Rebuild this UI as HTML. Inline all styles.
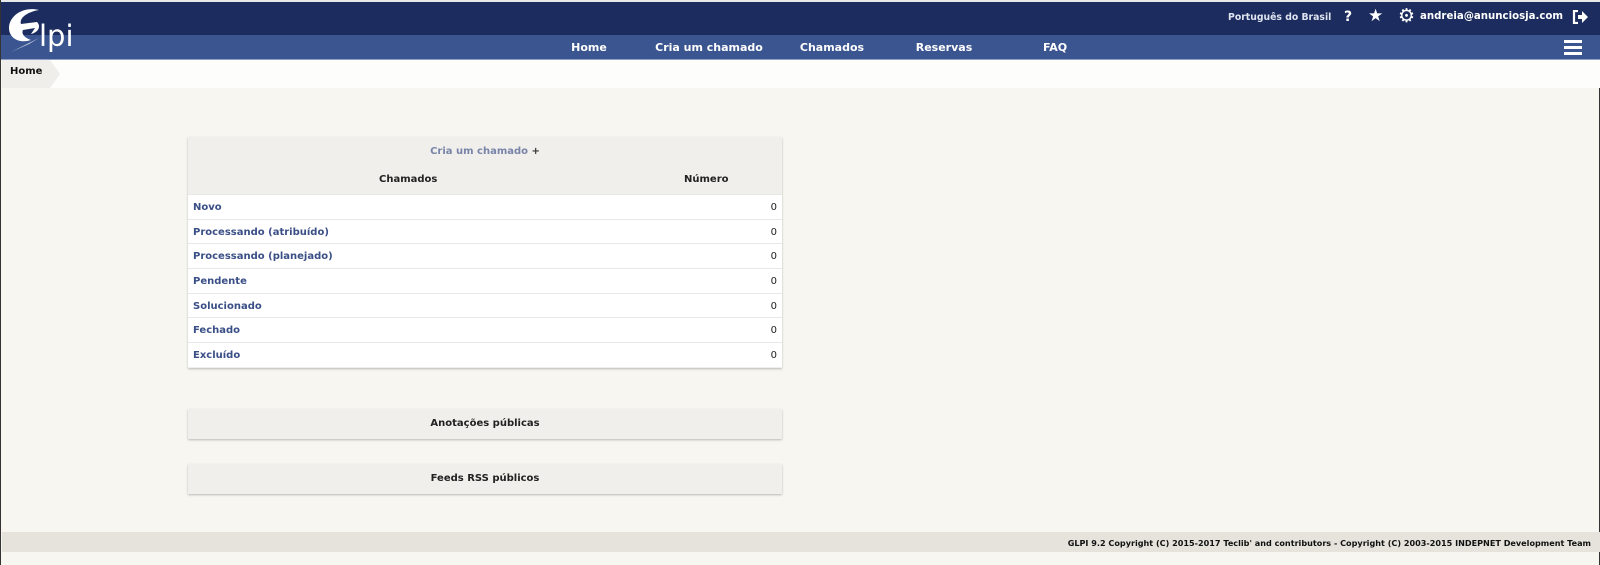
<!DOCTYPE html>
<html><head><meta charset="utf-8"><style>
*{margin:0;padding:0;box-sizing:border-box}
body{width:1600px;height:565px;background:#f7f6f1;font-family:"DejaVu Sans","Liberation Sans",sans-serif;position:relative;overflow:hidden;border-left:1px solid #333;border-right:1px solid #333}
.abs{position:absolute}
#top{left:0;top:0;width:1600px;height:35px;background:#1c2c5e;border-top:2px solid #e8e8e8}
#nav{left:0;top:35px;width:1600px;height:25px;background:#3b5590;border-bottom:1px solid #8ea0c8}
#crumb{left:1px;top:60px;width:1598px;height:28px;background:#fdfdfb}
.t{position:absolute;white-space:nowrap;font-weight:bold}
.navi{color:#fff;font-size:11px;top:41px;transform:translateX(-50%)}
.box{position:absolute;left:187px;width:594px;box-shadow:0 1px 2px rgba(0,0,0,.25)}
.row{height:24.7px;border-top:1px solid #e8e8e8;background:#fff;position:relative;font-size:10px;font-weight:bold}
.row span{position:absolute;left:5px;top:7px;color:#3a4f86}
.row b{position:absolute;right:5px;top:7px;color:#222;font-weight:normal}
</style></head><body>
<div id="top" class="abs"></div>
<div id="nav" class="abs"></div>
<div id="crumb" class="abs"></div>
<div class="abs" style="left:1px;top:60px;width:48px;height:28px;background:#efeeea"></div>
<div class="abs" style="left:49px;top:60px;width:0;height:0;border-top:14px solid transparent;border-bottom:14px solid transparent;border-left:10px solid #efeeea"></div>
<div class="t" style="left:9px;top:66px;font-size:10px;color:#111">Home</div>
<!-- logo -->
<svg class="abs" style="left:4px;top:6px" width="80" height="50" viewBox="0 0 80 50">
<path d="M34 4 C18 0 4 10 4 22 C4 32 14 38 26 34 C20 32 16 28 18 24 L30 22 L26 28 C34 26 36 20 32 16 L16 18 C14 12 22 6 34 4Z" fill="#fff"/>
<path d="M6 46 L34 32 L24 38Z" fill="#cdd5ea"/>
<text x="34" y="40" fill="#fff" font-family="DejaVu Sans" font-size="29">lpi</text>
</svg>
<!-- top right -->
<div class="t" style="left:1227px;top:12px;font-size:9.3px;color:#dfe4f0">Português do Brasil</div>
<div class="t" style="left:1343px;top:9px;font-size:14px;color:#fff">?</div>
<div class="t" style="left:1367px;top:6px;font-size:17px;color:#fff">★</div>
<div class="t" style="left:1397px;top:5px;font-size:19px;color:#fff">⚙</div>
<div class="t" style="left:1419px;top:11px;font-size:10.2px;color:#fff">andreia@anunciosja.com</div>
<svg class="abs" style="left:1571px;top:10px" width="16" height="14" viewBox="0 0 16 14"><path d="M6 1H2v12h4" stroke="#fff" stroke-width="2.2" fill="none"/><path d="M6 5h4V1l6 6-6 6V9H6z" fill="#fff"/></svg>
<!-- nav -->
<div class="t navi" style="left:588px">Home</div>
<div class="t navi" style="left:708px">Cria um chamado</div>
<div class="t navi" style="left:831px">Chamados</div>
<div class="t navi" style="left:943px">Reservas</div>
<div class="t navi" style="left:1054px">FAQ</div>
<div class="abs" style="left:1563px;top:40px;width:18px;height:3px;background:#fff;box-shadow:0 6px 0 #fff,0 12px 0 #fff"></div>
<!-- table -->
<div class="box" style="top:137px;height:231px;background:#f0efec">
 <div style="height:28px;text-align:center;padding-top:9px;font-size:10px;font-weight:bold;color:#7884a8">Cria um chamado <span style="color:#333">+</span></div>
 <div style="height:29px;position:relative;font-size:10px;font-weight:bold;color:#222">
  <span style="position:absolute;left:191px;top:9px">Chamados</span>
  <span style="position:absolute;left:496px;top:9px">Número</span>
 </div>
 <div class="row"><span>Novo</span><b>0</b></div>
 <div class="row"><span>Processando (atribuído)</span><b>0</b></div>
 <div class="row"><span>Processando (planejado)</span><b>0</b></div>
 <div class="row"><span>Pendente</span><b>0</b></div>
 <div class="row"><span>Solucionado</span><b>0</b></div>
 <div class="row"><span>Fechado</span><b>0</b></div>
 <div class="row"><span>Excluído</span><b>0</b></div>
</div>
<div class="box" style="top:409px;height:30px;background:#f0efec;text-align:center;font-size:10px;font-weight:bold;color:#222;padding-top:9px">Anotações públicas</div>
<div class="box" style="top:464px;height:30px;background:#f0efec;text-align:center;font-size:10px;font-weight:bold;color:#222;padding-top:9px">Feeds RSS públicos</div>
<!-- footer -->
<div class="abs" style="left:1px;top:532px;width:1598px;height:20px;background:#e5e3dc"></div>
<div class="t" style="right:8px;top:538px;font-size:8.1px;color:#111">GLPI 9.2 Copyright (C) 2015-2017 Teclib' and contributors - Copyright (C) 2003-2015 INDEPNET Development Team</div>
</body></html>
